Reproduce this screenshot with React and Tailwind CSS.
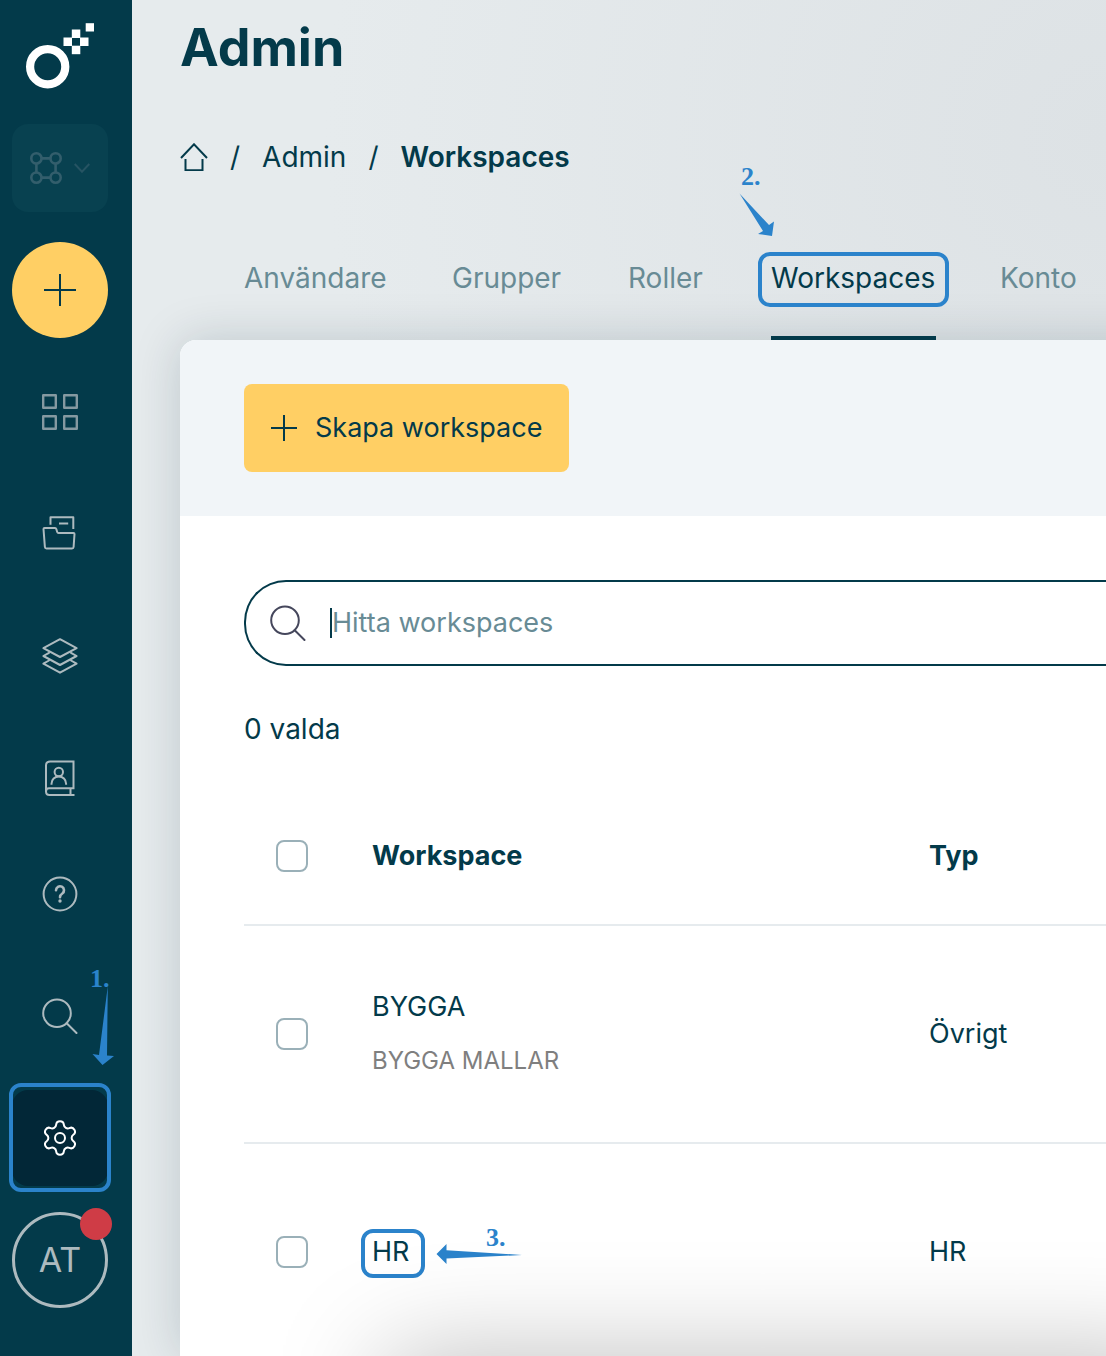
import React, { useState } from 'react';
import clsx from 'clsx';
import { Settings } from 'lucide-react';

const LogoIcon = () => (
  <svg width="68" height="66" viewBox="0 0 68 66" fill="#ffffff" aria-hidden="true">
    <circle cx="21.7" cy="43.7" r="17.6" fill="none" stroke="#ffffff" strokeWidth="8.2" />
    <rect x="37.5" y="14.5" width="8.5" height="8.5" />
    <rect x="45.8" y="6.5" width="8.5" height="8.5" />
    <rect x="54" y="14.5" width="8.5" height="8.5" />
    <rect x="45.8" y="22.7" width="8.5" height="8.5" />
    <rect x="59.7" y="0.2" width="8.3" height="8.3" />
  </svg>
);

const NodesIcon = () => (
  <svg width="32" height="32" viewBox="0 0 32 32" fill="none" stroke="#335e6c" strokeWidth="2.6" aria-hidden="true">
    <circle cx="6.4" cy="6.4" r="5.1" />
    <circle cx="25.6" cy="6.4" r="5.1" />
    <circle cx="6.4" cy="25.6" r="5.1" />
    <circle cx="25.6" cy="25.6" r="5.1" />
    <path d="M11.5 6.4h9M11.5 25.6h9M6.4 11.5v9M25.6 11.5v9" />
  </svg>
);

const ChevronIcon = () => (
  <svg width="16" height="10" viewBox="0 0 16 10" fill="none" stroke="#265463" strokeWidth="2" aria-hidden="true">
    <path d="M0.7 1 8 8.7 15.3 1" />
  </svg>
);

const PlusIcon = ({ size }) => (
  <svg width={size} height={size} viewBox={`0 0 ${size} ${size}`} fill="none" stroke="#033a4a" strokeWidth="2" aria-hidden="true">
    <path d={`M${size / 2} 0v${size}M0 ${size / 2}h${size}`} />
  </svg>
);

const NavSvg = ({ children, ...props }) => (
  <svg
    width="36"
    height="36"
    viewBox="0 0 36 36"
    fill="none"
    stroke="#adbabf"
    strokeWidth="2"
    strokeLinecap="round"
    strokeLinejoin="round"
    aria-hidden="true"
    {...props}
  >
    {children}
  </svg>
);

const GridIcon = () => (
  <NavSvg stroke="#8499a1" strokeWidth="2.4">
    <rect x="1.2" y="1.2" width="12.600" height="12.600" />
    <rect x="22.200" y="1.2" width="12.600" height="12.600" />
    <rect x="1.2" y="22.200" width="12.600" height="12.600" />
    <rect x="22.200" y="22.200" width="12.600" height="12.600" />
  </NavSvg>
);

const FolderIcon = () => (
  <NavSvg strokeLinecap="butt">
    <path d="M8.5 8.7V1.2h22.8V13" />
    <path d="M17 7.5h9.2" />
    <path d="M2.5 12H13q1 0 1.3 1l.9 3q.3 1 1.3 1h15q1 0 1 1l-.9 13q-.1 1.5-1.6 1.5H4.5Q3 32.5 2.9 31L1.5 13q0-1 1-1Z" />
  </NavSvg>
);

const LayersIcon = () => (
  <NavSvg>
    <path d="M18 1.2 34.6 10.2 18 19 1.4 10.2Z" />
    <path d="M7 14.8 1.4 18 18 27 34.6 18 29 14.8" />
    <path d="M7 22.5 1.4 25.7 18 34.7 34.6 25.7 29 22.5" />
  </NavSvg>
);

const ContactsIcon = () => (
  <NavSvg strokeLinecap="butt" strokeLinejoin="miter">
    <path d="M32.5 35H7.500Q4 35 4 31.5V5.500Q4 1.5 8 1.5H31.5V28.3H7Q4 28.3 4 31.5M28.5 28.3V35" />
    <circle cx="16.8" cy="12" r="4.2" />
    <path d="M9.5 24.7v-1a7.300 7.300 0 0 1 14.6 0v1" />
  </NavSvg>
);

const HelpIcon = () => (
  <NavSvg>
    <circle cx="18" cy="18" r="16.4" />
    <path d="M14 14.2a4 4 0 1 1 6.300 3.300Q18 19 18 21.2" strokeWidth="2.6" />
    <circle cx="18" cy="25" r="1.7" fill="#adbabf" stroke="none" />
  </NavSvg>
);

const SearchIcon = (props) => (
  <NavSvg {...props}>
    <circle cx="15" cy="15.3" r="13.8" />
    <path d="M24.7 25.2 34.5 35" />
  </NavSvg>
);

const HomeIcon = () => (
  <svg width="28" height="28" viewBox="0 0 28 28" fill="none" stroke="#033a4a" strokeWidth="2" aria-hidden="true">
    <path d="M1 15 14 1.3 27 15" />
    <path d="M5.5 16v11.200h17V16" />
  </svg>
);

const navItems = [
  { name: 'Dashboard', icon: GridIcon },
  { name: 'Dokument', icon: FolderIcon },
  { name: 'Mallar', icon: LayersIcon },
  { name: 'Kontakter', icon: ContactsIcon },
];

const tabs = [
  { name: 'Användare', width: 'w-[144px]' },
  { name: 'Grupper', width: 'w-[112px]' },
  { name: 'Roller', width: 'w-[79px]' },
  { name: 'Workspaces', width: 'w-[165px]' },
  { name: 'Konto', width: 'w-[80px]' },
];

const workspaces = [
  { name: 'BYGGA', description: 'BYGGA MALLAR', type: 'Övrigt' },
  { name: 'HR', type: 'HR', marked: true },
];

const Marker = ({ className }) => (
  <span className={clsx('absolute border-4 border-[#2b83cb] rounded-xl pointer-events-none', className)} />
);

const StepNumber = ({ className, children }) => (
  <span
    className={clsx(
      "absolute font-['Liberation_Serif',serif] font-bold text-[26px] leading-7 text-[#2b83cb] pointer-events-none",
      className
    )}
  >
    {children}
  </span>
);

const Checkbox = ({ label }) => (
  <input
    type="checkbox"
    aria-label={label}
    className="block appearance-none w-8 h-8 border-2 border-[#9ab0b8] rounded-lg bg-white checked:bg-[#033a4a]"
  />
);

const Sidebar = () => (
  <aside className="w-[132px] shrink-0 bg-[#033a4a] pl-3 pr-6 pt-[23px] flex flex-col">
    <a href="#" aria-label="Start" className="pl-3.5">
      <LogoIcon />
    </a>

    <button
      aria-label="Byt vy"
      className="mt-[35px] h-[88px] shrink-0 rounded-2xl bg-[#084150] flex items-center justify-center gap-3"
    >
      <NodesIcon />
      <ChevronIcon />
    </button>

    <button aria-label="Skapa" className="mt-[30px] h-24 shrink-0 rounded-full bg-[#ffcf64] flex items-center justify-center">
      <PlusIcon size={32} />
    </button>

    <nav className="mt-[26px] flex flex-col">
      {navItems.map((item) => {
        const Icon = item.icon;
        return (
          <a key={item.name} href="#" aria-label={item.name} className="h-24 mb-[26px] flex items-center justify-center">
            <Icon />
          </a>
        );
      })}
      <a href="#" aria-label="Hjälp" className="h-[84px] flex items-center justify-center">
        <HelpIcon />
      </a>
      <a href="#" aria-label="Sök" className="mt-8 h-24 flex items-center justify-center">
        <SearchIcon />
      </a>
      <a
        href="#"
        aria-label="Inställningar"
        className="relative mt-[26px] h-24 rounded-2xl bg-[#022737] flex items-center justify-center"
      >
        <Settings size={40} strokeWidth={1.2} className="text-white" />
        <Marker className="-inset-x-[3px] -top-[7px] -bottom-1.5" />
        <StepNumber className="left-[78px] -top-[125px]">1.</StepNumber>
        <svg className="absolute left-20 -top-[106px]" width="24" height="84" viewBox="0 0 24 84" fill="#2b83cb">
          <path d="M15.8 2 15 71.5 22 72 10.5 81 0.5 70 7 71Z" />
        </svg>
      </a>
    </nav>

    <button
      aria-label="Konto AT"
      className="relative mt-[26px] h-24 shrink-0 rounded-full border-[3px] border-[#adbabf] text-[#adbabf] text-[34px] leading-10"
    >
      AT
      <span className="absolute -top-[7px] -right-[7px] w-8 h-8 rounded-full bg-[#cf3c46]" />
    </button>
  </aside>
);

const WorkspaceTable = () => (
  <table className="w-full mt-10 table-fixed border-collapse text-left text-[27px] leading-9">
    <colgroup>
      <col className="w-32" />
      <col className="w-[557px]" />
      <col />
    </colgroup>
    <thead>
      <tr className="h-[138px] border-b-2 border-[#e6ebee]">
        <th className="pl-8">
          <Checkbox label="Markera alla" />
        </th>
        <th className="font-bold">Workspace</th>
        <th className="font-bold">Typ</th>
      </tr>
    </thead>
    <tbody>
      {workspaces.map((ws) => (
        <tr key={ws.name} className="h-[218px] border-b-2 border-[#e6ebee]">
          <td className="pl-8">
            <Checkbox label={ws.name} />
          </td>
          <td>
            <a href="#" className="relative inline-block">
              {ws.name}
              {ws.marked && (
                <>
                  <Marker className="-left-[11px] -top-[5px] w-16 h-[49px]" />
                  <StepNumber className="left-[114px] -top-2.5">3.</StepNumber>
                  <svg className="absolute left-16 top-2" width="86" height="24" viewBox="0 0 86 24" fill="#2b83cb">
                    <path d="M86 13 10.5 8.2V2L0.5 12l10 10V16.5Z" />
                  </svg>
                </>
              )}
            </a>
            {ws.description && <p className="mt-[18px] text-2xl leading-9 text-[#7f7f7f]">{ws.description}</p>}
          </td>
          <td>{ws.type}</td>
        </tr>
      ))}
    </tbody>
  </table>
);

const App = () => {
  const [activeTab, setActiveTab] = useState('Workspaces');
  const [query, setQuery] = useState('');

  return (
    <div className="relative flex h-screen overflow-hidden bg-[#e6ebed] font-[Inter,sans-serif] text-[28px] leading-9 text-[#033a4a]">
      <Sidebar />

      <main className="flex-1 min-w-0 pl-12 pt-5 flex flex-col bg-[radial-gradient(circle_at_100%_10%,#dde2e5_0%,#e6ebed_50%)]">
        <h1 className="text-[52px] leading-14 font-bold">Admin</h1>

        <nav aria-label="Brödsmulor" className="mt-[63px] flex items-center gap-[22px] whitespace-nowrap">
          <a href="#" aria-label="Hem">
            <HomeIcon />
          </a>
          <span>/</span>
          <a href="#">Admin</a>
          <span>/</span>
          <span className="font-semibold">Workspaces</span>
        </nav>

        <div role="tablist" className="mt-[85px] pl-16 flex gap-16 shrink-0 whitespace-nowrap">
          {tabs.map((tab) => {
            const isActive = tab.name === activeTab;
            return (
              <button
                key={tab.name}
                role="tab"
                aria-selected={isActive}
                onClick={() => setActiveTab(tab.name)}
                className={clsx(
                  'relative z-10 h-20 shrink-0 pb-10 border-b-4 text-left',
                  tab.width,
                  isActive ? 'border-[#033a4a]' : 'border-transparent text-[#688b95]'
                )}
              >
                {tab.name}
                {tab.name === 'Workspaces' && (
                  <>
                    <Marker className="-inset-x-[13px] -top-2 h-[55px]" />
                    <StepNumber className="-left-[30px] -top-[97px]">2.</StepNumber>
                    <svg className="absolute -left-8 -top-[68px]" width="36" height="46" viewBox="0 0 36 46" fill="#2b83cb">
                      <path d="M0.5 1.5 30 33l5-3.5L33 44l-14-2 5-3Z" />
                    </svg>
                  </>
                )}
              </button>
            );
          })}
        </div>

        <section className="flex-1 min-h-0 -mr-16 bg-white rounded-tl-2xl shadow-[0_0_48px_rgba(3,40,55,0.18)]">
          <div className="bg-[#f1f5f8] rounded-tl-2xl pl-16 py-11">
            <button className="h-[88px] w-[325px] pl-[27px] flex items-center gap-[18px] rounded-lg bg-[#ffcf64] text-[27px] whitespace-nowrap">
              <PlusIcon size={26} />
              Skapa workspace
            </button>
          </div>

          <div className="pl-16 pt-16">
            <label className="h-[86px] flex items-center pl-6 border-2 border-r-0 border-[#033a4a] rounded-l-[42px]">
              <SearchIcon stroke="#45475c" />
              <span className="ml-6 w-0.5 h-[30px] bg-[#033a4a]" />
              <input
                type="text"
                aria-label="Hitta workspaces"
                placeholder="Hitta workspaces"
                value={query}
                onChange={(e) => setQuery(e.target.value)}
                className="flex-1 min-w-0 outline-none text-[27px] placeholder:text-[#688b95]"
              />
            </label>
            <p className="mt-[45px]">0 valda</p>
            <WorkspaceTable />
          </div>
        </section>
      </main>

      {/* Shade rising from below the window edge */}
      <div className="absolute top-full left-[385px] -right-20 h-40 pointer-events-none shadow-[0_0_110px_rgba(0,0,0,0.26)]" />
    </div>
  );
};

export default App;
